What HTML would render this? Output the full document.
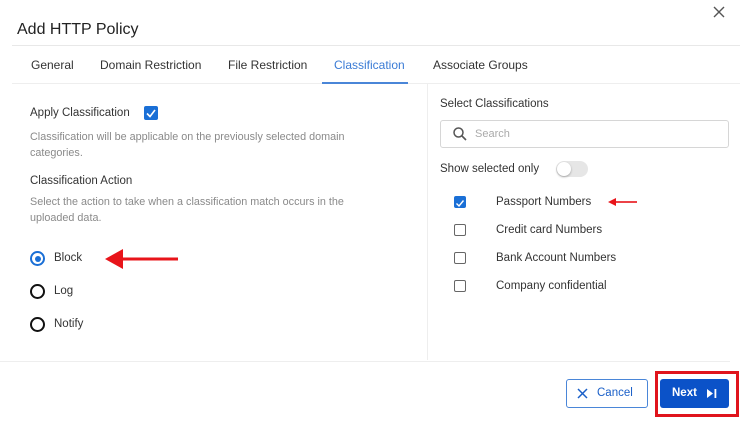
<!DOCTYPE html>
<html><head><style>
*{margin:0;padding:0;box-sizing:border-box}
body{width:752px;height:434px;background:#fff;font-family:"Liberation Sans",sans-serif;position:relative;overflow:hidden;color:#333}
.a{position:absolute;white-space:nowrap}
.t{font-size:11.5px;color:#333}
.tb{font-size:12px;color:#333}
.g{font-size:10.8px;color:#8a8a8a}
.cb{position:absolute;width:12px;height:12px;border:1.5px solid #666;border-radius:2px;background:#fff}
.rd{position:absolute;width:15px;height:15px;border:2px solid #111;border-radius:50%}
</style></head><body>
<div class="a" style="left:17px;top:21px;font-size:16px;color:#222">Add HTTP Policy</div>
<svg class="a" style="left:712px;top:5px" width="14" height="14" viewBox="0 0 14 14"><path d="M2 2L12 12M12 2L2 12" stroke="#555" stroke-width="1.4"/></svg>
<div class="a" style="left:12px;top:45px;width:728px;height:1px;background:#e8e8e8"></div>
<div class="a tb" style="left:31px;top:58px">General</div>
<div class="a tb" style="left:100px;top:58px">Domain Restriction</div>
<div class="a tb" style="left:228px;top:58px">File Restriction</div>
<div class="a tb" style="left:334px;top:58px;color:#3a7bd5">Classification</div>
<div class="a tb" style="left:433px;top:58px">Associate Groups</div>
<div class="a" style="left:12px;top:83px;width:728px;height:1px;background:#eee"></div>
<div class="a" style="left:322px;top:82px;width:86px;height:2px;background:#4a86d8"></div>
<div class="a" style="left:427px;top:84px;width:1px;height:276px;background:#eee"></div>
<div class="a" style="left:0;top:361px;width:730px;height:1px;background:#eee"></div>

<div class="a t" style="left:30px;top:107px">Apply Classification</div>
<div class="a" style="left:144px;top:106px;width:14px;height:14px;background:#1a6fd6;border-radius:2px"><svg width="14" height="14"><path d="M3 7.5L6 10.5L11 4" stroke="#fff" stroke-width="1.6" fill="none"/></svg></div>
<div class="a g" style="left:30px;top:131px">Classification will be applicable on the previously selected domain</div>
<div class="a g" style="left:30px;top:147px">categories.</div>
<div class="a t" style="left:30px;top:175px">Classification Action</div>
<div class="a g" style="left:30px;top:196px">Select the action to take when a classification match occurs in the</div>
<div class="a g" style="left:30px;top:212px">uploaded data.</div>
<div class="rd" style="left:30px;top:251px;border-color:#1a6fd6"><div style="position:absolute;left:2.5px;top:2.5px;width:6px;height:6px;border-radius:50%;background:#1a6fd6"></div></div>
<div class="a t" style="left:54px;top:252px">Block</div>
<div class="rd" style="left:30px;top:284px"></div>
<div class="a t" style="left:54px;top:285px">Log</div>
<div class="rd" style="left:30px;top:317px"></div>
<div class="a t" style="left:54px;top:318px">Notify</div>
<svg class="a" style="left:103px;top:248px" width="75" height="22"><path d="M2 11L20 1V21Z" fill="#e8141a"/><rect x="18" y="9.5" width="57" height="3" fill="#e8141a"/></svg>

<div class="a t" style="left:440px;top:98px">Select Classifications</div>
<div class="a" style="left:440px;top:120px;width:289px;height:28px;border:1px solid #d6d6d6;border-radius:3px"></div>
<svg class="a" style="left:452px;top:126px" width="16" height="16"><circle cx="6.5" cy="6.5" r="4.5" stroke="#555" stroke-width="1.5" fill="none"/><path d="M10 10L14 14" stroke="#555" stroke-width="1.6"/></svg>
<div class="a" style="left:475px;top:128px;font-size:11px;color:#aaa">Search</div>
<div class="a t" style="left:440px;top:163px">Show selected only</div>
<div class="a" style="left:556px;top:161px;width:32px;height:16px;border-radius:8px;background:#e6e6e6"><div style="position:absolute;left:1px;top:1px;width:14px;height:14px;border-radius:50%;background:#fff;box-shadow:0 1px 2px rgba(0,0,0,.3)"></div></div>
<div class="a" style="left:454px;top:196px;width:12px;height:12px;background:#1a6fd6;border-radius:2px"><svg width="12" height="12"><path d="M2.5 6.5L5 9L9.5 3.5" stroke="#fff" stroke-width="1.4" fill="none"/></svg></div>
<div class="a t" style="left:496px;top:196px">Passport Numbers</div>
<svg class="a" style="left:608px;top:197px" width="30" height="10"><path d="M0 5L8 1V9Z" fill="#e8141a"/><rect x="6" y="4.2" width="23" height="1.6" fill="#e8141a"/></svg>
<div class="cb" style="left:454px;top:224px"></div>
<div class="a t" style="left:496px;top:224px">Credit card Numbers</div>
<div class="cb" style="left:454px;top:252px"></div>
<div class="a t" style="left:496px;top:252px">Bank Account Numbers</div>
<div class="cb" style="left:454px;top:280px"></div>
<div class="a t" style="left:496px;top:280px">Company confidential</div>

<div class="a" style="left:566px;top:379px;width:82px;height:29px;border:1px solid #4a86d8;border-radius:3px"></div>
<svg class="a" style="left:577px;top:388px" width="11" height="11"><path d="M1 1L10 10M10 1L1 10" stroke="#1a5fc8" stroke-width="1.5"/></svg>
<div class="a" style="left:597px;top:387px;font-size:11.5px;color:#1a5fc8">Cancel</div>
<div class="a" style="left:655px;top:371px;width:84px;height:46px;border:3px solid #e0141c"></div>
<div class="a" style="left:660px;top:379px;width:69px;height:29px;background:#0b52c8;border-radius:3px"></div>
<div class="a" style="left:672px;top:387px;font-size:11.5px;color:#fff;font-weight:bold">Next</div>
<svg class="a" style="left:706px;top:388px" width="12" height="11"><path d="M1 1L7 5.5L1 10Z" fill="#fff"/><rect x="8.5" y="1" width="1.8" height="9" fill="#fff"/></svg>
</body></html>
